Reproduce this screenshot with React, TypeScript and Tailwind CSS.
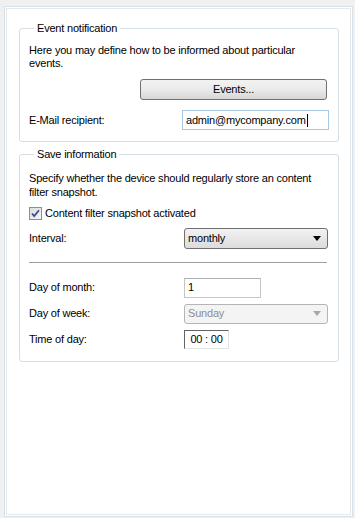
import { ReactNode } from 'react';

const font = { fontFamily: '"Liberation Sans", Arial, sans-serif' };

const Group = ({ title, children, pb = 'pb-[11px]' }: { title: string; children: ReactNode; pb?: string }) => (
  <fieldset className={`w-[320px] rounded-[3px] border border-[#d5dfe5] px-[9px] ${pb} tracking-[-0.2px]`}>
    <legend className="ml-[5px] px-[3px] text-[11px] leading-[14px] text-black">{title}</legend>
    {children}
  </fieldset>
);

const Row = ({
  label,
  children,
  className,
  labelWidth = 'w-[155px]',
}: {
  label: string;
  children: ReactNode;
  className?: string;
  labelWidth?: string;
}) => (
  <div className={`flex items-center ${className ?? ''}`}>
    <span className={`${labelWidth} text-[11px] text-black`}>{label}</span>
    {children}
  </div>
);

const Arrow = ({ color }: { color: string }) => (
  <svg width="8" height="5" viewBox="0 0 8 5" className="mr-[6px]">
    <path d="M0 0h8L4 5z" fill={color} />
  </svg>
);

const Checkbox = () => (
  <span className="flex h-[13px] w-[13px] items-center justify-center border border-[#8e8f8f] bg-gradient-to-br from-[#dcdcdc] to-[#f5f5f5]">
    <svg width="9" height="9" viewBox="0 0 9 9">
      <path d="M1 4.5l2.2 2.6L8 1.2" stroke="#3a4f8c" strokeWidth="1.8" fill="none" />
    </svg>
  </span>
);

export default function App() {
  return (
    <div className="h-[518px] w-[355px] bg-[#f0f0f0] pl-[4px] pt-[6px]" style={font}>
      <div className="h-[511px] w-[349px] border border-[#d9e1e8] bg-white p-[1px]">
        <div className="h-full w-full border border-[#e4e9ee] bg-white pl-[12px] pt-[12px]">
          <Group title="Event notification">
            <p className="mt-[9px] text-[11px] leading-[13px] text-black">
              Here you may define how to be informed about particular events.
            </p>
            <div className="mt-[9px] flex justify-end pr-[2px]">
              <button className="h-[21px] w-[187px] rounded-[3px] border border-[#707070] bg-gradient-to-b from-[#f2f2f2] via-[#ebebeb] to-[#d6d6d6] text-[11px] text-black">
                Events...
              </button>
            </div>
            <Row label="E-Mail recipient:" className="mt-[10px]" labelWidth="w-[153px]">
              <div className="flex h-[20px] w-[147px] items-center border border-[#a8c6e6] bg-white pl-[3px] text-[11px] text-black">
                admin@mycompany.com
                <span className="ml-[1px] h-[13px] w-px bg-black" />
              </div>
            </Row>
          </Group>

          <div className="h-[5px]" />

          <Group title="Save information" pb="pb-[12px]">
            <p className="mt-[10px] text-[11px] leading-[14px] text-black">
              Specify whether the device should regularly store an content filter snapshot.
            </p>
            <label className="mt-[6px] flex items-center gap-[3px] text-[11px] text-black">
              <Checkbox />
              Content filter snapshot activated
            </label>
            <Row label="Interval:" className="mt-[6px]">
              <div className="flex h-[21px] w-[144px] items-center justify-between rounded-[3px] border border-[#707070] bg-gradient-to-b from-[#f2f2f2] to-[#dcdcdc] pl-[3px] text-[11px] text-black">
                monthly
                <Arrow color="#000000" />
              </div>
            </Row>
            <div className="mt-[13px] h-px w-[298px] bg-[#a0a0a0]" />
            <Row label="Day of month:" className="mt-[15px]">
              <div className="flex h-[20px] w-[77px] items-center border border-[#c5c5c5] border-t-[#abadb3] bg-white pl-[3px] text-[11px] text-black">
                1
              </div>
            </Row>
            <Row label="Day of week:" className="mt-[6px]">
              <div className="flex h-[20px] w-[144px] items-center justify-between rounded-[3px] border border-[#b5b5b5] bg-[#f4f4f4] pl-[3px] text-[11px] text-[#8d8d8d]">
                Sunday
                <Arrow color="#a8a8a8" />
              </div>
            </Row>
            <Row label="Time of day:" className="mt-[6px]">
              <div className="flex h-[19px] w-[45px] items-center justify-center border border-[#e3e3e3] border-l-[#646464] border-t-[#646464] bg-white text-[11px] text-black">
                00 : 00
              </div>
            </Row>
          </Group>
        </div>
      </div>
    </div>
  );
}
